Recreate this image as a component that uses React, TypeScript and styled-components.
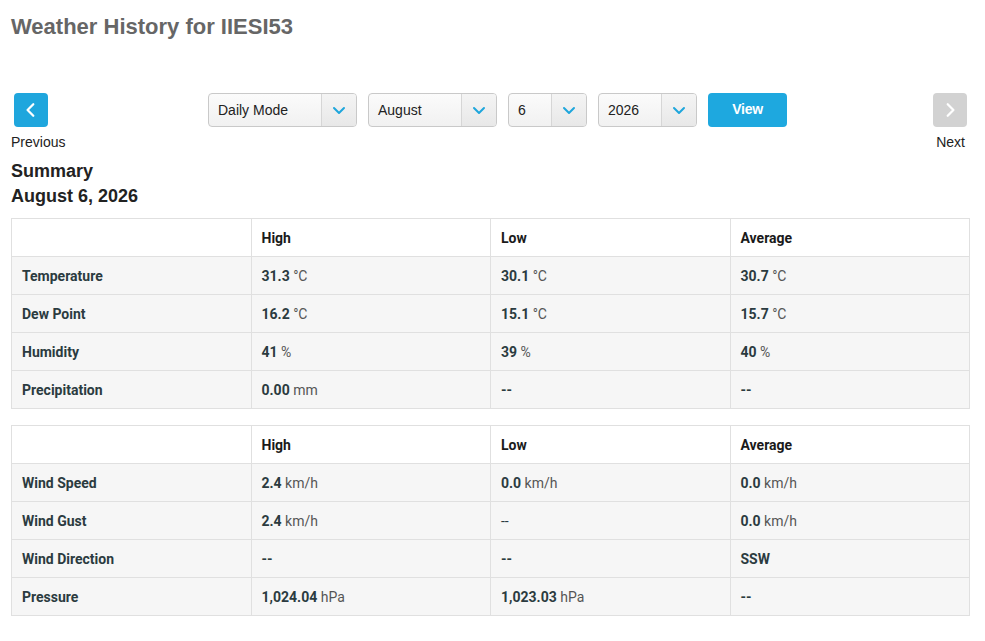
import React from "react";
import styled, { createGlobalStyle } from "styled-components";

const Global = createGlobalStyle`
  html, body { margin: 0; padding: 0; background: #fff; }
  body { font-family: "Liberation Sans", Arial, sans-serif; color: #222; }
  * { box-sizing: border-box; }
`;

const Page = styled.div`
  padding: 14px 15px 20px 11px;
`;

const Title = styled.h1`
  margin: 0;
  font-size: 22px;
  line-height: 26px;
  font-weight: bold;
  color: #666;
`;

const NavRow = styled.div`
  display: flex;
  align-items: flex-start;
  margin-top: 53px;
`;

const NavSide = styled.div<{ $align: "left" | "right" }>`
  display: flex;
  flex-direction: column;
  align-items: ${(p) => (p.$align === "left" ? "flex-start" : "flex-end")};
  width: 60px;
`;

const NavButton = styled.button<{ $active: boolean; $align: "left" | "right" }>`
  width: 34px;
  height: 34px;
  border: none;
  border-radius: 4px;
  padding: 0;
  margin: ${(p) => (p.$align === "left" ? "0 0 0 3px" : "0 3px 0 0")};
  background: ${(p) => (p.$active ? "#1fa6dd" : "#d2d2d2")};
  display: flex;
  align-items: center;
  justify-content: center;
`;

const NavLabel = styled.span<{ $align: "left" | "right" }>`
  font-size: 14px;
  line-height: 16px;
  margin-top: 7px;
  margin-right: ${(p) => (p.$align === "right" ? "5px" : "0")};
  color: #222;
`;

const Controls = styled.div`
  flex: 1;
  display: flex;
  justify-content: center;
  gap: 11px;
  padding-left: 14px;
`;

const Select = styled.div<{ $w: number }>`
  width: ${(p) => p.$w}px;
  height: 34px;
  border: 1px solid #c9c9c9;
  border-radius: 4px;
  display: flex;
  background: linear-gradient(#fbfbfb, #f1f1f1);
  overflow: hidden;
`;

const SelectText = styled.span`
  flex: 1;
  padding-left: 9px;
  font-size: 14px;
  line-height: 32px;
  color: #222;
`;

const SelectArrow = styled.span`
  width: 35px;
  border-left: 1px solid #d6d6d6;
  background: linear-gradient(#f4f4f4, #e8e8e8);
  display: flex;
  align-items: center;
  justify-content: center;
`;

const ViewButton = styled.button`
  width: 79px;
  height: 34px;
  border: none;
  border-radius: 4px;
  background: #1ea8df;
  color: #fff;
  font-family: "Liberation Sans", Arial, sans-serif;
  font-weight: bold;
  font-size: 14px;
  letter-spacing: -0.3px;
  padding: 0 0 3px;
`;

const Summary = styled.h2`
  margin: 9px 0 9px;
  font-size: 18px;
  line-height: 25px;
  font-weight: bold;
  color: #222;
`;

const Table = styled.table`
  width: 959px;
  border-collapse: collapse;
  table-layout: fixed;
  font-family: Roboto, "Liberation Sans", sans-serif;
  font-size: 14px;
  margin-bottom: 16px;
`;

const HeadCell = styled.th`
  height: 38px;
  border: 1px solid #e0e0e0;
  background: #fff;
  text-align: left;
  padding: 0 10px;
  font-weight: bold;
  color: #1a1a1a;
`;

const Row = styled.tr`
  background: #f6f6f6;
`;

const LabelCell = styled.td`
  height: 38px;
  border: 1px solid #e0e0e0;
  padding: 0 10px;
  font-weight: bold;
  color: #2b3b40;
`;

const ValueCell = styled.td`
  height: 38px;
  border: 1px solid #e0e0e0;
  padding: 0 10px;
  color: #555;
`;

const Num = styled.strong`
  font-weight: bold;
  color: #2b3b40;
`;

const Dash = styled.span<{ $bold?: boolean }>`
  font-weight: ${(p) => (p.$bold ? "bold" : "normal")};
  color: #2b3b40;
`;

const Chevron = ({ dir, color, size = 14 }: { dir: "left" | "right" | "down"; color: string; size?: number }) => {
  const d =
    dir === "left" ? "M9 2 L4 7 L9 12" : dir === "right" ? "M5 2 L10 7 L5 12" : "M2 5 L7 10 L12 5";
  return (
    <svg width={size} height={size} viewBox="0 0 14 14">
      <path d={d} fill="none" stroke={color} strokeWidth={2} strokeLinecap="round" strokeLinejoin="round" />
    </svg>
  );
};

type Val = { n?: string; u?: string; dash?: "bold" | "light" };
type RowData = { label: string; vals: Val[] };

const table1: RowData[] = [
  { label: "Temperature", vals: [{ n: "31.3", u: "°C" }, { n: "30.1", u: "°C" }, { n: "30.7", u: "°C" }] },
  { label: "Dew Point", vals: [{ n: "16.2", u: "°C" }, { n: "15.1", u: "°C" }, { n: "15.7", u: "°C" }] },
  { label: "Humidity", vals: [{ n: "41", u: "%" }, { n: "39", u: "%" }, { n: "40", u: "%" }] },
  { label: "Precipitation", vals: [{ n: "0.00", u: "mm" }, { dash: "bold" }, { dash: "bold" }] },
];

const table2: RowData[] = [
  { label: "Wind Speed", vals: [{ n: "2.4", u: "km/h" }, { n: "0.0", u: "km/h" }, { n: "0.0", u: "km/h" }] },
  { label: "Wind Gust", vals: [{ n: "2.4", u: "km/h" }, { dash: "light" }, { n: "0.0", u: "km/h" }] },
  { label: "Wind Direction", vals: [{ dash: "bold" }, { dash: "bold" }, { n: "SSW" }] },
  { label: "Pressure", vals: [{ n: "1,024.04", u: "hPa" }, { n: "1,023.03", u: "hPa" }, { dash: "bold" }] },
];

const DataTable = ({ rows }: { rows: RowData[] }) => (
  <Table>
    <thead>
      <tr>
        <HeadCell></HeadCell>
        <HeadCell>High</HeadCell>
        <HeadCell>Low</HeadCell>
        <HeadCell>Average</HeadCell>
      </tr>
    </thead>
    <tbody>
      {rows.map((r) => (
        <Row key={r.label}>
          <LabelCell>{r.label}</LabelCell>
          {r.vals.map((v, i) => (
            <ValueCell key={i}>
              {v.dash ? (
                <Dash $bold={v.dash === "bold"}>--</Dash>
              ) : (
                <>
                  <Num>{v.n}</Num>
                  {v.u ? ` ${v.u}` : null}
                </>
              )}
            </ValueCell>
          ))}
        </Row>
      ))}
    </tbody>
  </Table>
);

const SelectBox = ({ w, text }: { w: number; text: string }) => (
  <Select $w={w}>
    <SelectText>{text}</SelectText>
    <SelectArrow>
      <Chevron dir="down" color="#1ea6dc" size={14} />
    </SelectArrow>
  </Select>
);

export default function App() {
  return (
    <>
      <Global />
      <Page>
        <Title>Weather History for IIESI53</Title>
        <NavRow>
          <NavSide $align="left">
            <NavButton $active $align="left">
              <Chevron dir="left" color="#fff" size={16} />
            </NavButton>
            <NavLabel $align="left">Previous</NavLabel>
          </NavSide>
          <Controls>
            <SelectBox w={149} text="Daily Mode" />
            <SelectBox w={129} text="August" />
            <SelectBox w={79} text="6" />
            <SelectBox w={99} text="2026" />
            <ViewButton>View</ViewButton>
          </Controls>
          <NavSide $align="right">
            <NavButton $active={false} $align="right">
              <Chevron dir="right" color="#fff" size={16} />
            </NavButton>
            <NavLabel $align="right">Next</NavLabel>
          </NavSide>
        </NavRow>
        <Summary>
          Summary
          <br />
          August 6, 2026
        </Summary>
        <DataTable rows={table1} />
        <DataTable rows={table2} />
      </Page>
    </>
  );
}
